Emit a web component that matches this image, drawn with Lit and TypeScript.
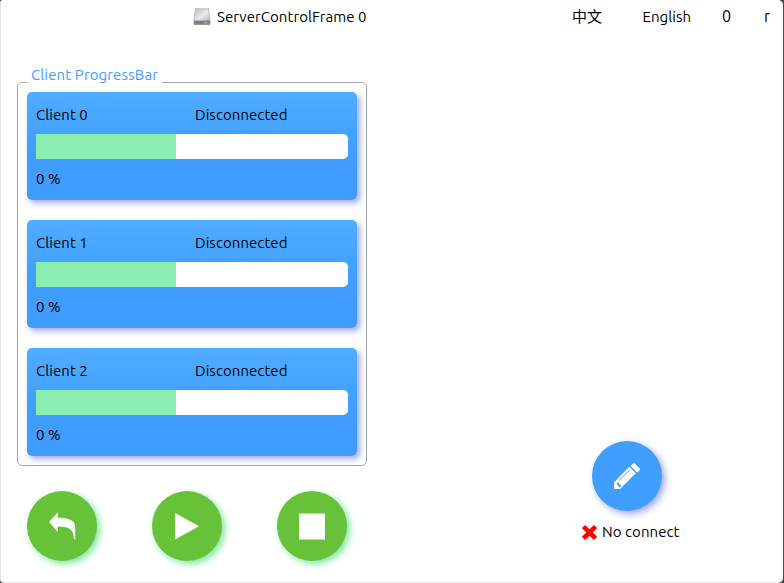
import { LitElement, html, css, svg } from "lit";
import { customElement, property } from "lit/decorators.js";

const textStyle = css`
  :host {
    font-family: Ubuntu, "Noto Sans", "Noto Sans CJK SC", sans-serif;
    font-size: 15px;
    line-height: 20px;
    letter-spacing: 0.06px;
    color: #000;
  }
`;

@customElement("client-card")
export class ClientCard extends LitElement {
  @property() name = "";
  @property() status = "Disconnected";
  @property({ type: Number }) percent = 0;
  @property({ type: Number }) fill = 140;

  static styles = [
    textStyle,
    css`
      :host {
        display: block;
        box-sizing: border-box;
        height: 108px;
        padding: 13px 9px 0;
        border-radius: 5px;
        background: linear-gradient(#50acff, #409eff 60%, #409bff);
        box-shadow: 3px 3px 6px rgba(65, 80, 205, 0.5);
      }
      .row {
        display: grid;
        grid-template-columns: 159px 1fr;
        height: 20px;
      }
      .track {
        height: 25px;
        margin: 9px 0 10px;
        border-radius: 0 5px 5px 0;
        background: #fff;
        overflow: hidden;
      }
      .fill { height: 100%; background: #89edb0; }
    `,
  ];

  render() {
    return html`
      <div class="row"><span>${this.name}</span><span>${this.status}</span></div>
      <div class="track"><div class="fill" style="width:${this.fill}px"></div></div>
      <div>${this.percent} %</div>
    `;
  }
}

const glyphs: Record<string, unknown> = {
  back: svg`<path fill="#fff" d="M22 31 L30.8 21.3 V26.8 C41 26.8 48 29 48.2 36 V48.2 H47 C46.8 39 43 35.6 30.8 35.6 V41 Z"/>`,
  play: svg`<path fill="#fff" d="M23 22 L47 35.2 L23 48.5Z"/>`,
  stop: svg`<path fill="#fff" d="M22 22.5h26v26H22z"/>`,
  edit: svg`
    <g fill="#fff">
      <path d="M37.2 25.8 L43.8 32.2 L28.8 47.2 L28.2 48 H22 V41.6Z"/>
      <path d="M38.4 24.8 L40.8 22.7 Q42 21.9 43.2 23 L47.4 27.1 Q48.4 28.3 47.4 29.4 L45 31.4Z"/>
    </g>
    <path d="M26.8 39.5 L37.6 29.3" stroke="#409eff" stroke-width="1" fill="none"/>
    <path d="M24.3 42.7 L25.8 41.2 L27 42.3 L27.4 43.6 L29.2 44 L28.2 46.3 L26.6 46 L26.2 44.2Z" fill="#409eff"/>`,
};

@customElement("round-button")
export class RoundButton extends LitElement {
  @property() glyph = "play";
  @property() label = "";

  static styles = css`
    :host { display: block; width: 70px; height: 70px; }
    button {
      display: block;
      width: 70px;
      height: 70px;
      padding: 0;
      border: 0;
      border-radius: 50%;
      background: #67c23a;
      box-shadow: 3px 3px 7px rgba(60, 215, 110, 0.65);
    }
    button.edit {
      background: #409eff;
      box-shadow: 3px 3px 7px rgba(65, 80, 205, 0.5);
    }
    svg { display: block; }
  `;

  render() {
    return html`<button class=${this.glyph} aria-label=${this.label}>
      <svg width="70" height="70" viewBox="0 0 70 70">${glyphs[this.glyph]}</svg>
    </button>`;
  }
}

@customElement("app-root")
export class AppRoot extends LitElement {
  static styles = [
    textStyle,
    css`
      :host {
        display: flex;
        flex-direction: column;
        box-sizing: border-box;
        width: 784px;
        height: 583px;
        overflow: hidden;
        background: #4a4a4a;
      }
      .window {
        flex: 1;
        display: flex;
        flex-direction: column;
        box-sizing: border-box;
        margin-right: 1px;
        border-left: 1px solid #e4e4e4;
        border-bottom: 1px solid #e9e9e9;
        border-radius: 3px 5px 5px 4px;
        background: #fff;
      }
      header {
        display: grid;
        grid-template-columns: 379px 70.5px 79.5px 42px 1fr;
        height: 34px;
        padding-left: 192px;
        align-items: center;
      }
      .title { display: flex; align-items: center; gap: 6px; }
      .big { font-size: 16px; padding-bottom: 3px; }
      main { display: grid; grid-template-columns: 350px 1fr; padding: 48px 0 0 16px; }
      .panel {
        position: relative;
        box-sizing: border-box;
        height: 384px;
        padding: 9px;
        border: 1px solid #a5a5a5;
        border-radius: 5px;
        display: flex;
        flex-direction: column;
        gap: 20px;
      }
      .legend {
        position: absolute;
        left: 9px;
        top: -18px;
        padding: 0 4px;
        background: #fff;
        color: #409eff;
        letter-spacing: 0.12px;
      }
      .actions { display: flex; gap: 55px; padding: 25px 0 0 10px; }
      aside {
        display: flex;
        flex-direction: column;
        align-items: flex-start;
        padding: 359px 0 0 215px;
      }
      aside round-button { margin-left: 10px; }
      .state { display: flex; align-items: center; gap: 4px; margin-top: 11px; }
    `,
  ];

  render() {
    return html`
      <div class="window">
        <header>
          <div class="title">
            <svg width="18" height="18" viewBox="0 0 18 18">
              <defs>
                <linearGradient id="lid" x2="1" y2="1">
                  <stop stop-color="#b8b8c0" /><stop offset=".55" stop-color="#e8e8f0" /><stop offset="1" stop-color="#b5b5bf" />
                </linearGradient>
              </defs>
              <path d="M2.4 .8H15.6L17 13H1Z" fill="url(#lid)" stroke="#b0b0b8" stroke-width=".8" />
              <path d="M1 13H17V16Q17 16.6 16.3 16.6H1.7Q1 16.6 1 16Z" fill="#8b8b8f" stroke="#707074" stroke-width=".6" />
              <path d="M3 14.8H10" stroke="#6e6e72" /><path d="M12 14.8H14" stroke="#72d832" stroke-width="1.4" />
            </svg>
            <span>ServerControlFrame 0</span>
          </div>
          <span>中文</span>
          <span>English</span>
          <span class="big">0</span>
          <span class="big">r</span>
        </header>
        <main>
          <section>
            <div class="panel">
              <span class="legend">Client ProgressBar</span>
              ${[0, 1, 2].map((n) => html`<client-card name="Client ${n}"></client-card>`)}
            </div>
            <div class="actions">
              <round-button glyph="back" label="Back"></round-button>
              <round-button glyph="play" label="Play"></round-button>
              <round-button glyph="stop" label="Stop"></round-button>
            </div>
          </section>
          <aside>
            <round-button glyph="edit" label="Edit"></round-button>
            <div class="state">
              <svg width="16" height="16" viewBox="0 0 16 16">
                <g fill="#ff0000">
                  <rect x="-1" y="6.2" width="17" height="4.6" rx=".8" transform="rotate(45 7.5 8.5)" />
                  <rect x="-1" y="6.2" width="17" height="4.6" rx=".8" transform="rotate(-45 7.5 8.5)" />
                </g>
              </svg>
              <span>No connect</span>
            </div>
          </aside>
        </main>
      </div>
    `;
  }
}
